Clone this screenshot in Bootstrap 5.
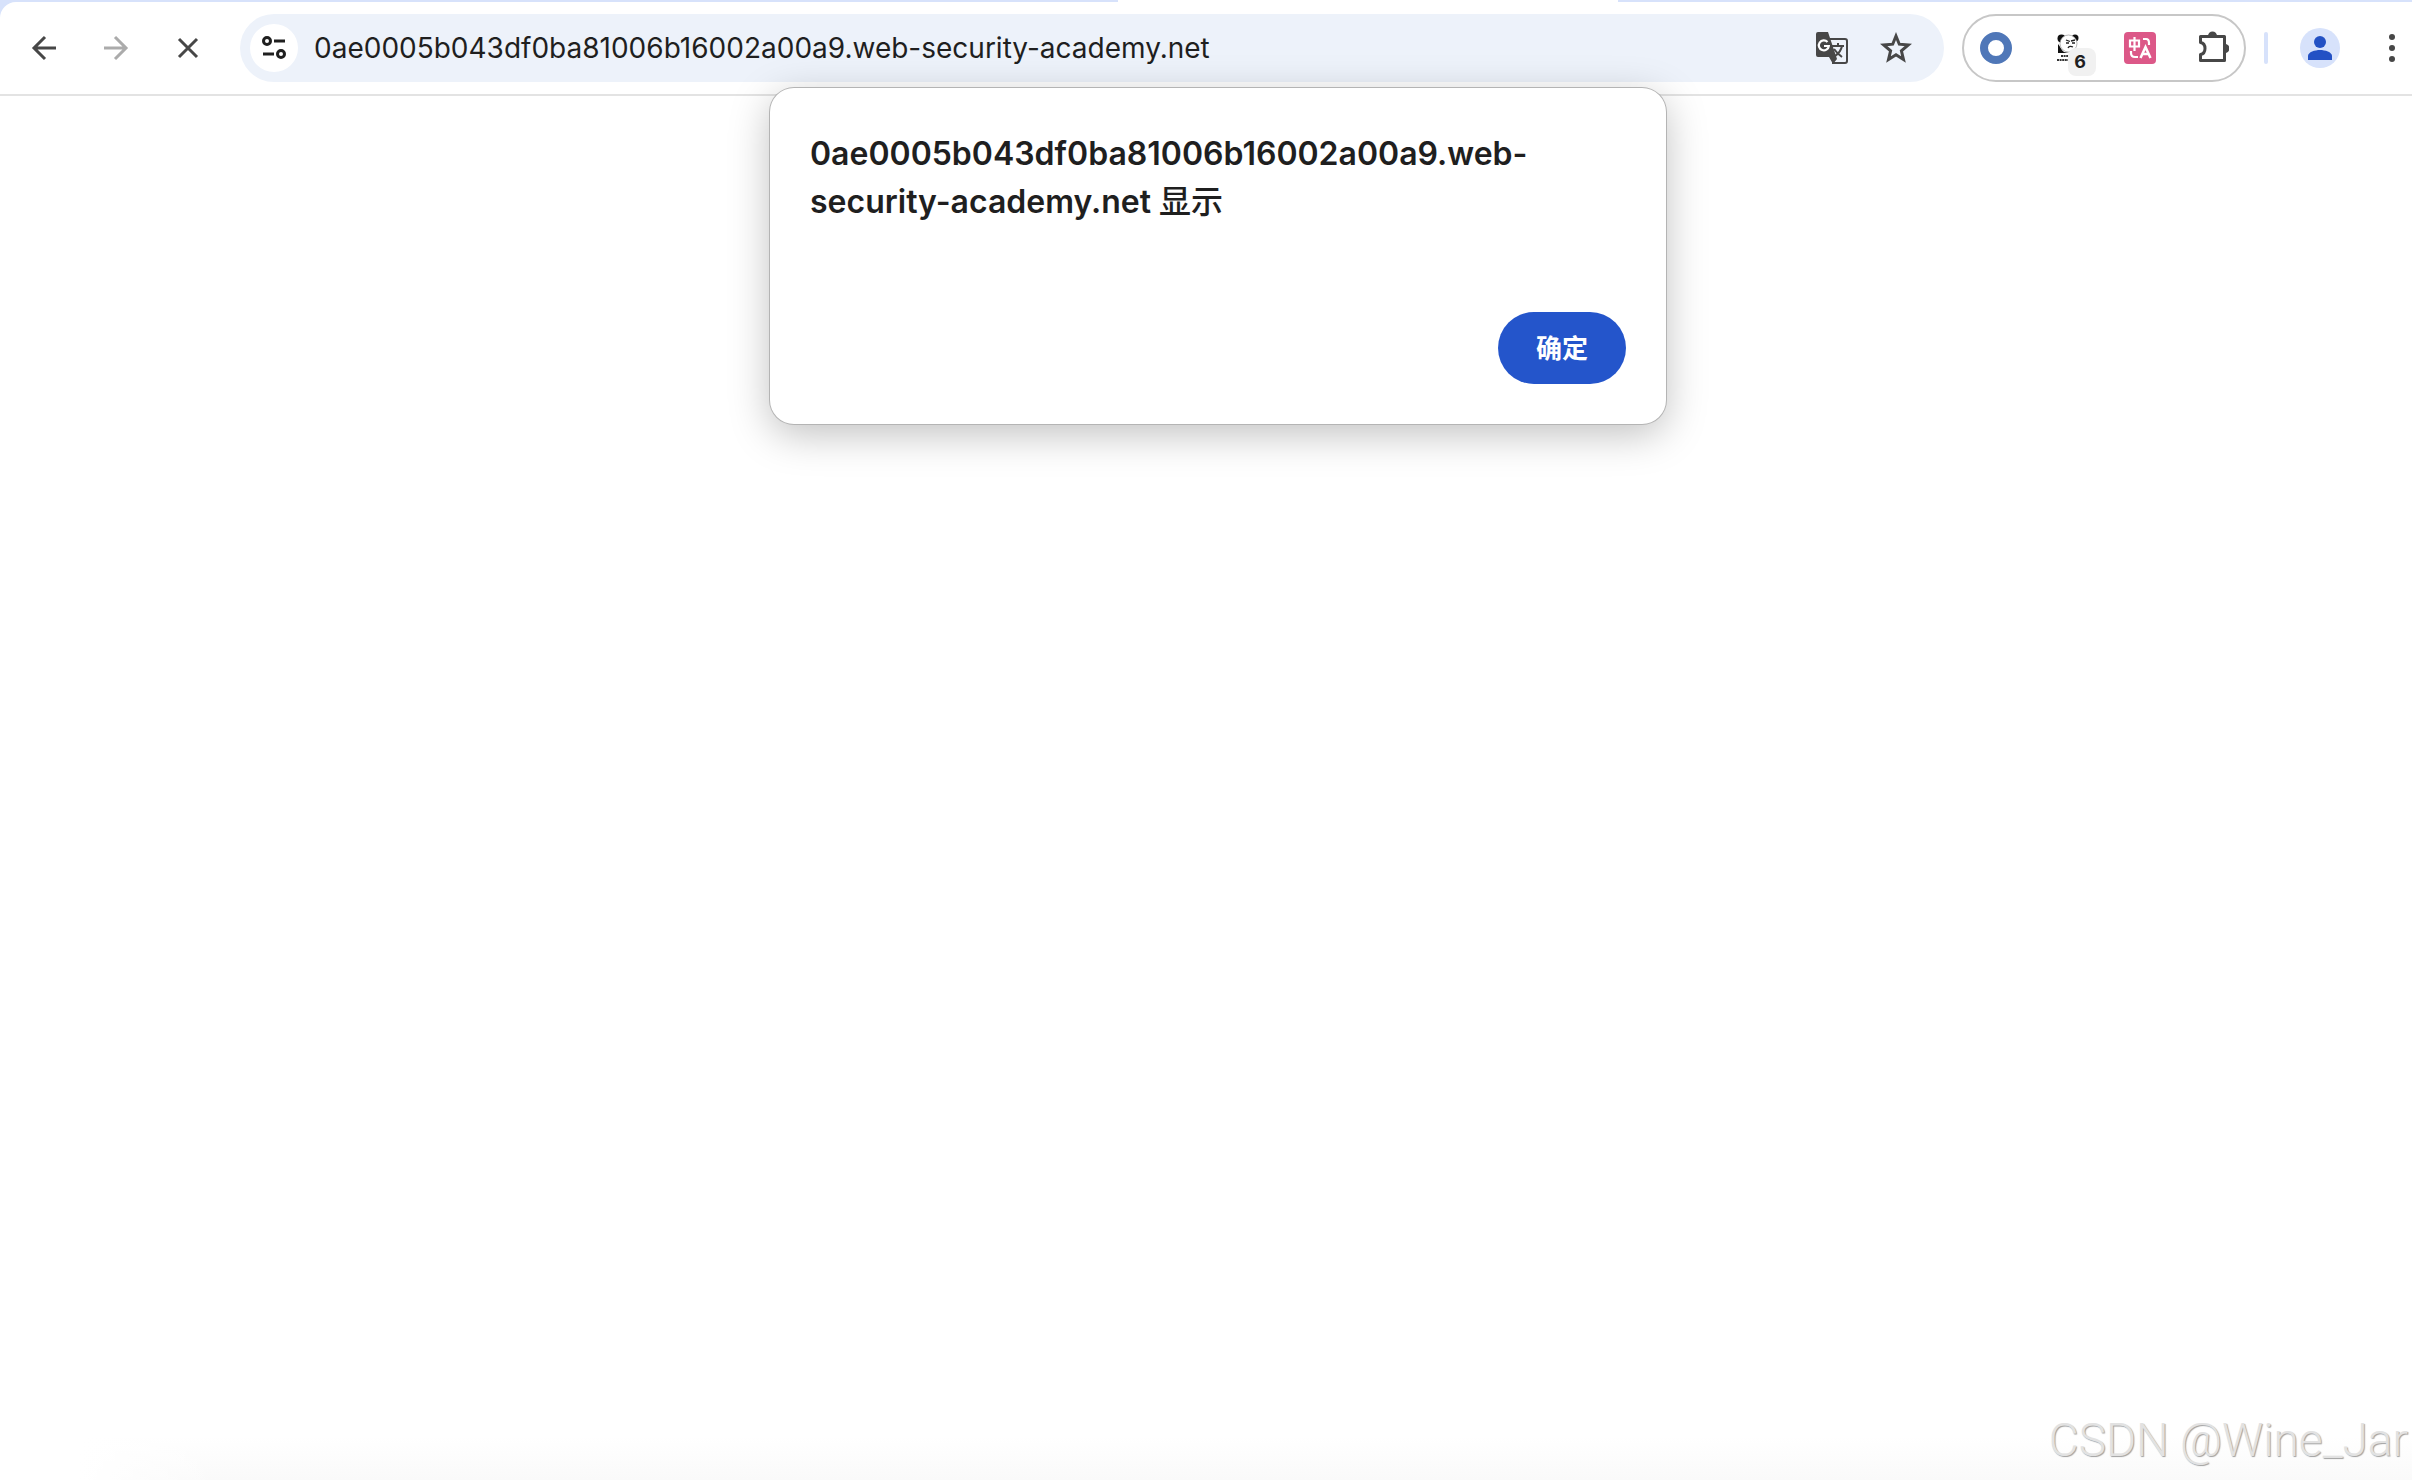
<!DOCTYPE html>
<html lang="zh-CN">
<head>
<meta charset="utf-8">
<meta name="viewport" content="width=device-width, initial-scale=1">
<title>web-security-academy.net</title>
<link href="https://cdn.jsdelivr.net/npm/bootstrap@5.3.0/dist/css/bootstrap.min.css" rel="stylesheet">
<style>
body{font-family:Inter,"Noto Sans CJK SC",sans-serif;color:#1f1f1f;background:#fff}
svg{display:block}
.browser{background:#d7e2fb;padding-top:2px;position:relative}
.tab-foot{left:1118px;top:0;width:500px;height:2px;background:#fff}
.toolbar{background:#fff;border-top-left-radius:16px;border-bottom:2px solid #e3e3e3;padding:12px 0}
.tool{width:72px;height:68px;border:0;background:none;padding:0;display:flex;align-items:center;justify-content:center;color:#474747;flex:none}
.tool:disabled{color:#ababab}
.omnibox{background:#edf2fa;border-radius:34px;height:68px;padding:0 16px 0 10px;margin-left:16px}
.site-info{width:48px;height:48px;border:0;border-radius:50%;background:#fff;padding:0;display:flex;align-items:center;justify-content:center;flex:none}
.address{border:0;background:none;font-size:28px;line-height:40px;color:#1f1f1f;padding:0;margin-left:16px;outline:0;min-width:0}
.omnibox .tool{width:64px}
.extensions{border:2px solid #c7c7c7;border-radius:34px;height:68px;width:284px;margin-left:18px;flex:none}
.extensions .tool{height:64px}
.ext-count{left:36px;top:32px;width:28px;height:28px;padding-right:4px;border-radius:8px;background:#f1f1f1;font-size:18px;line-height:28px;font-weight:700;color:#1f1f1f}
.divider{width:4px;height:32px;border-radius:2px;background:#d7e2fb;margin:0 16px 0 18px;flex:none}
.tool.menu{width:56px;padding-left:16px}
.alert-box{position:absolute;top:88px;left:770px;width:896px;padding:42px 40px 40px;background:#fff;border-radius:24px;box-shadow:0 0 0 1px #b4b4b4,0 10px 40px rgba(0,0,0,.25)}
.alert-title{font-size:32px;line-height:48px;font-weight:600;margin:0 0 86px}
.alert-title span{font-weight:500}
.ok{width:128px;height:72px;border:0;border-radius:36px;background:#2455cb;color:#fff;font-size:26px;font-weight:700;padding:0}
.bottom-shade{left:0;right:0;bottom:0;height:44px;background:linear-gradient(to right,#fff 80px,rgba(255,255,255,0) 220px),linear-gradient(#fff,#fafafa)}
.watermark{right:4px;bottom:12px;font-family:Roboto,sans-serif;font-weight:300;font-size:46px;line-height:56px;color:#e2e2e2;text-shadow:1px 1px 1px #a0a0a0}
</style>
<script src="https://cdn.jsdelivr.net/npm/bootstrap@5.3.0/dist/js/bootstrap.bundle.min.js"></script>
</head>
<body class="vh-100 position-relative">
<header class="browser">
<div class="tab-foot position-absolute"></div>
<nav class="toolbar d-flex align-items-center" aria-label="Browser">
<button class="tool ms-2" aria-label="Back"><svg width="26" height="32" viewBox="0 0 26 32" fill="none" stroke="currentColor" stroke-width="3"><path d="M25 16H4M14 5 3 16l11 11"/></svg></button>
<button class="tool" disabled aria-label="Forward"><svg width="26" height="32" viewBox="0 0 26 32" fill="none" stroke="currentColor" stroke-width="3"><path d="M1 16h21M12 5l11 11-11 11"/></svg></button>
<button class="tool" aria-label="Stop"><svg width="24" height="24" viewBox="0 0 24 24" fill="none" stroke="currentColor" stroke-width="3"><path d="m3 3 18 18M21 3 3 21"/></svg></button>
<div class="omnibox d-flex align-items-center flex-grow-1">
<button class="site-info" aria-label="Site information"><svg width="26" height="26" viewBox="0 0 26 26" fill="none" stroke="#1f1f1f" stroke-width="3"><circle cx="6" cy="6" r="3.5"/><path d="M13 6h11M2 19h11"/><circle cx="20" cy="19" r="3.5"/></svg></button>
<input class="address flex-grow-1" type="text" aria-label="Address" value="0ae0005b043df0ba81006b16002a00a9.web-security-academy.net">
<button class="tool" aria-label="Translate"><svg width="34" height="34" viewBox="0 0 34 34" fill="none"><path d="M15 8h15a2 2 0 0 1 2 2v20a2 2 0 0 1-2 2H17" stroke="#474747" stroke-width="2"/><path d="M3 1h10l4 12 5 15-4 5-4-7H3a2 2 0 0 1-2-2V3a2 2 0 0 1 2-2z" fill="#474747"/><path d="M12.500 11a5 5 0 1 0 1.300 4H9" stroke="#fff" stroke-width="2.200"/><path d="M17 15h12M23 12v3M27 15c-1 5-4 8-7 10M19 18c2 3 4 5 8 8" stroke="#474747" stroke-width="2"/></svg></button>
<button class="tool" aria-label="Bookmark"><svg width="32" height="32" viewBox="0 0 32 32" fill="none" stroke="currentColor" stroke-width="3"><path d="m16 4 3.300 8.200 9 .7-6.900 5.900 2.100 8.700L16 22.800l-7.500 4.700 2.100-8.700-6.900-5.900 9-.7z"/></svg></button>
</div>
<div class="extensions d-flex align-items-center justify-content-center">
<button class="tool" aria-label="Ring extension"><svg width="32" height="32"><circle cx="16" cy="16" r="12" fill="none" stroke="#4f77b8" stroke-width="8"/></svg></button>
<button class="tool position-relative" aria-label="Panda extension, 6"><svg width="22" height="28" viewBox="0 0 22 28"><path d="M1 10c2 2 3 6 6 8l5 1H1z" fill="#111"/><circle cx="4.500" cy="4.500" r="4" fill="#111"/><circle cx="18" cy="4" r="3.500" fill="#111"/><ellipse cx="11.500" cy="9.500" rx="8.500" ry="8.500" fill="#fff" stroke="#999" stroke-width=".7"/><path d="m9 6 4 1.500M14 7l4-1M9 9h3M15 9h3M11 14c1-2 3-2 5-1" stroke="#222" stroke-width="1.300" fill="none"/><path d="M4 22h8M0 26h12" stroke="#333" stroke-width="1.800" stroke-dasharray="2 .6"/></svg><span class="ext-count position-absolute">6</span></button>
<button class="tool" aria-label="Translation extension"><svg width="32" height="32" viewBox="0 0 32 32" fill="none"><rect width="32" height="32" rx="4" fill="#dc5888"/><path d="M6 8.500h9v6H6zM10.500 5v14M19 7h3q3 0 3 4v2M7 19v2q0 4 4 4h3" stroke="#fff" stroke-width="2.200"/><path d="m16.500 26 5-11 5 11M18.500 22h6" stroke="#fff" stroke-width="2.500"/></svg></button>
<button class="tool" aria-label="Extensions"><svg width="34" height="34" viewBox="0 0 34 34"><path d="M5.500 5.500h24v24h-24v-6c6-1 6-11 0-12z" fill="none" stroke="#474747" stroke-width="3" stroke-linejoin="round"/><path d="M13 5a4 4 0 0 1 9 0zM30 13a4 4 0 0 1 0 9z" fill="#474747"/></svg></button>
</div>
<div class="divider"></div>
<button class="tool" aria-label="Profile"><svg width="40" height="40" viewBox="0 0 40 40"><circle cx="20" cy="20" r="20" fill="#d7e2fb"/><circle cx="20" cy="14" r="6" fill="#2351c4"/><path d="M8 32v-4c0-4 7-6 12-6s12 2 12 6v4z" fill="#2351c4"/></svg></button>
<button class="tool menu" aria-label="Menu"><svg width="6" height="28" viewBox="0 0 6 28" fill="currentColor"><circle cx="3" cy="3" r="3"/><circle cx="3" cy="14" r="3"/><circle cx="3" cy="25" r="3"/></svg></button>
</nav>
</header>
<section class="alert-box" role="dialog" aria-labelledby="alert-title">
<h1 class="alert-title" id="alert-title">0ae0005b043df0ba81006b16002a00a9.web-<br>security-academy.net <span>显示</span></h1>
<div class="d-flex justify-content-end"><button class="ok">确定</button></div>
</section>
<div class="bottom-shade position-absolute"></div>
<div class="watermark position-absolute">CSDN @Wine_Jar</div>
</body>
</html>
